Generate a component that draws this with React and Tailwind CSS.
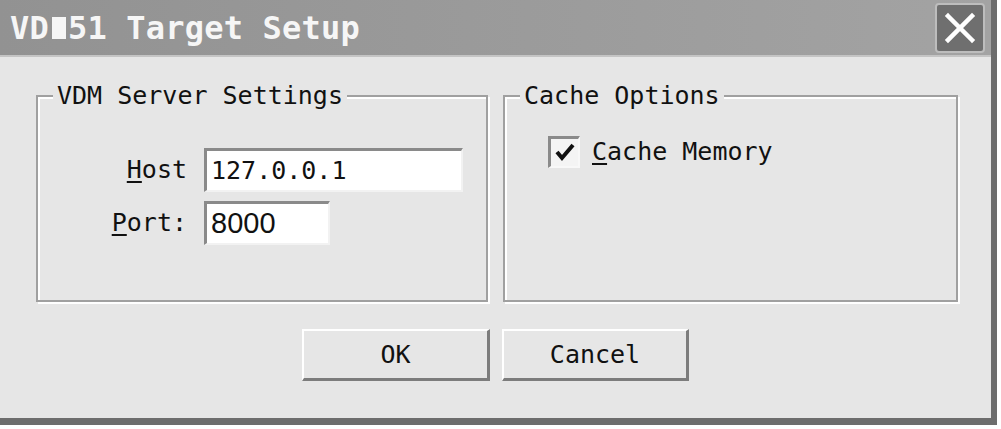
const mono = "font-['DejaVu_Sans_Mono','Liberation_Mono',monospace]";

function GroupBox({ title, className, children }) {
  return (
    <fieldset
      className={`h-[219px] border-2 border-[#a0a0a0] shadow-[2px_2px_0_#ffffff,inset_2px_2px_0_#ffffff] ${className}`}
    >
      <legend className="ml-[15px] px-[4px] leading-[26px] bg-[#e6e6e6]">{title}</legend>
      {children}
    </fieldset>
  );
}

function Field({ label, hotkey, width, value, sans }) {
  return (
    <>
      <label className="text-right">
        <span className="underline decoration-2 underline-offset-[3px]">{hotkey}</span>
        {label}
      </label>
      <div
        className={`h-[44px] bg-white border-t-[3px] border-l-[3px] border-r-2 border-b-2 border-t-[#8a8a8a] border-l-[#8a8a8a] border-r-[#f2f2f2] border-b-[#f2f2f2] flex items-center pl-[4px] ${width}`}
      >
        <span className={sans ? "font-['Liberation_Sans',Arial,sans-serif] text-[29px] leading-none" : ''}>{value}</span>
      </div>
    </>
  );
}

function Button({ children, width }) {
  return (
    <button
      type="button"
      className={`h-[52px] ${width} bg-[#e6e6e6] border-t-2 border-l-2 border-t-white border-l-white border-r-[3px] border-b-[3px] border-r-[#7c7c7c] border-b-[#7c7c7c] flex items-center justify-center`}
    >
      {children}
    </button>
  );
}

export default function App() {
  return (
    <div className={`w-[1001px] h-[429px] bg-white overflow-hidden ${mono} text-[25px] text-[#111111]`}>
      <div className="w-[997px] h-[425px] bg-[#e6e6e6] border-r-[6px] border-b-[7px] border-r-[#6d6d6d] border-b-[#6d6d6d] flex flex-col">
        {/* title bar */}
        <div className="h-[57px] shrink-0 flex items-center pl-[10px] pr-[6px] bg-gradient-to-r from-[#929292] to-[#a3a3a3] border-b-2 border-b-[#c4c4c4]">
          <span className="font-bold text-[32px] leading-none text-[#f6f6f6] tracking-[0.2px] flex items-center">
            VD
            <span className="inline-block w-[19px] h-[22px] pl-[3px]">
              <span className="block w-[14px] h-[22px] bg-[#f6f6f6]" />
            </span>
            51 Target Setup
          </span>
          <button
            type="button"
            className="ml-auto w-[50px] h-[50px] rounded-[4px] border-2 border-[#bdbdbd] bg-[#6f6f6f] flex items-center justify-center"
          >
            <svg width="32" height="32" viewBox="0 0 32 32">
              <path d="M4 4 L28 28 M28 4 L4 28" stroke="#ffffff" strokeWidth="4.5" strokeLinecap="square" />
            </svg>
          </button>
        </div>

        {/* body */}
        <div className="flex-1 pt-[26px] pl-[36px]">
          <div className="flex gap-[15px]">
            <GroupBox title="VDM Server Settings" className="w-[452px]">
              <div className="grid grid-cols-[149px_auto] gap-x-[17px] gap-y-[9px] items-center mt-[39px]">
                <Field hotkey="H" label="ost" width="w-[259px]" value="127.0.0.1" />
                <Field hotkey="P" label="ort:" width="w-[126px]" value="8000" sans />
              </div>
            </GroupBox>
            <GroupBox title="Cache Options" className="w-[455px]">
              <div className="flex items-center mt-[24px] ml-[43px]">
                <div className="w-[32px] h-[32px] bg-[#f4f4f4] border-t-[3px] border-l-[3px] border-r-2 border-b-2 border-t-[#8a8a8a] border-l-[#8a8a8a] border-r-[#f8f8f8] border-b-[#f8f8f8] flex items-center justify-center">
                  <svg width="22" height="22" viewBox="0 0 22 22">
                    <path d="M3 11 L8 17 L19 4" fill="none" stroke="#111111" strokeWidth="4" />
                  </svg>
                </div>
                <span className="ml-[12px]">
                  <span className="underline decoration-2 underline-offset-[3px]">C</span>ache Memory
                </span>
              </div>
            </GroupBox>
          </div>

          <div className="flex justify-center gap-[12px] mt-[27px] pr-[36px]">
            <Button width="w-[188px]">OK</Button>
            <Button width="w-[187px]">Cancel</Button>
          </div>
        </div>
      </div>
    </div>
  );
}
